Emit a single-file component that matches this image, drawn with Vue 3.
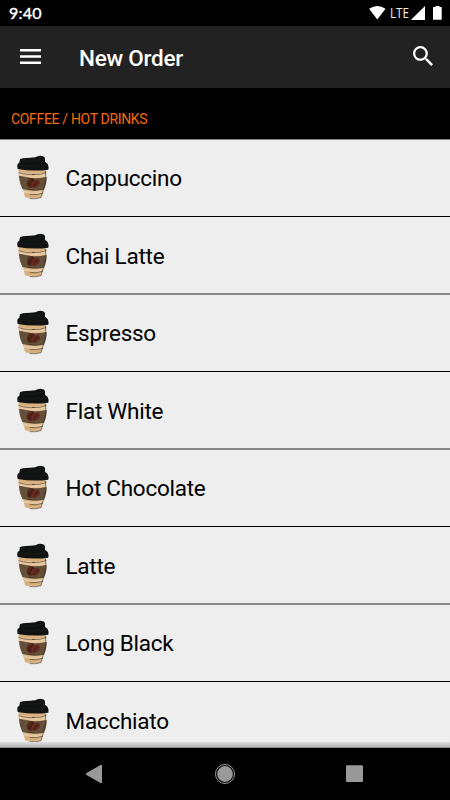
<template>
  <div class="screen">
    <div class="status">
      <span class="clock">9:40</span>
      <svg class="indicators" width="76" height="26" viewBox="0 0 76 26" fill="#fff">
        <path d="M.1 8.700Q8.300 3.400 16.500 8.700L8.300 19.400Z" />
        <text x="21" y="18" textLength="19" lengthAdjust="spacingAndGlyphs">LTE</text>
        <path d="M42.300 20V19.500L56 6V20Z" />
        <path d="M64.800 7H66.500V6h4V7h2.200V19.800H64V7Z" />
      </svg>
    </div>

    <header class="appbar">
      <button type="button" class="icon-btn menu" aria-label="Menu">
        <svg width="21" height="15" viewBox="0 0 21 15" fill="#fff">
          <path d="M0 0h21v2.600H0zM0 6.200h21v2.600H0zM0 12.400h21v2.600H0z" />
        </svg>
      </button>
      <h1>New Order</h1>
      <button type="button" class="icon-btn search" aria-label="Search">
        <svg width="20" height="20" viewBox="3 3 17.500 17.500" fill="#fff">
          <path d="M15.500 14h-.79l-.28-.27A6.471 6.471 0 0 0 16 9.500 6.500 6.500 0 1 0 9.500 16c1.610 0 3.090-.59 4.230-1.570l.27.28v.79l5 4.990L20.490 19l-4.990-5zm-6 0C7.010 14 5 11.990 5 9.500S7.010 5 9.500 5 14 7.010 14 9.500 11.990 14 9.500 14z" />
        </svg>
      </button>
    </header>

    <div class="section">COFFEE / HOT DRINKS</div>

    <ul class="list">
      <li v-for="drink in drinks" :key="drink" class="row">
        <svg class="cup" width="34" height="46" viewBox="18 30 102 138">
          <path fill="#d8b17e" d="M26 70L107 70Q111 92 104 112Q101 132 94 157Q71 164 45 157Q42 137 32 117Q24 96 26 70Z" />
          <path fill="#e6c7a0" d="M27 81Q66 91 108 82V96Q66 101 28 93Z" />
          <path fill="#645039" d="M27 94Q67 104 110 96Q110 119 102 133Q66 140 37 132Q28 113 27 94Z" />
          <path fill="#e3c7a5" d="M38 135Q67 144 101 136L98 147Q67 148 42 143Z" />
          <path fill="none" stroke="#201b15" stroke-width="1.500" stroke-linecap="round" d="M27 83Q55 92 73 88M68 89Q91 90 108 83M29 94Q52 97 65 101M102 133Q80 140 56 133M60 149Q80 151 98 145M60 161Q78 163 93 158L103 125Q110 105 107 79" />
          <ellipse fill="#55271b" cx="63" cy="114" rx="12" ry="15" transform="rotate(28 63 114)" />
          <ellipse fill="#642b1e" cx="77" cy="116" rx="14" ry="10" transform="rotate(-38 77 116)" />
          <path fill="none" stroke="#28130e" stroke-width="2" d="M57 124Q61 117 61 112Q66 111 69 104M69 125Q76 121 76 115Q82 116 84 109" />
          <path fill="#111212" d="M30 42Q34 39 60 38L76 37Q85 31 95 33Q104 33 105 41L105 50L113 57Q117 65 115 74Q69 80 23 72Q20 63 23 57L28 53Z" />
          <path fill="none" stroke="#1c1e1e" stroke-width="2" d="M32 48Q67 51 100 43M27 61Q68 66 109 61" />
        </svg>
        <span>{{ drink }}</span>
      </li>
    </ul>

    <nav class="navbar">
      <svg width="450" height="52" viewBox="0 0 450 52" fill="#999">
        <path d="M86.500 25L100.500 17Q102 16.300 102 18V34Q102 35.700 100.500 35L86.500 27Q85 26 86.500 25Z" />
        <circle cx="225" cy="26" r="7.900" />
        <circle cx="225" cy="26" r="9.500" fill="none" stroke="#999" stroke-width="1" />
        <rect x="346" y="17.300" width="17" height="16.700" rx="1" />
      </svg>
    </nav>
  </div>
</template>

<script setup>
const drinks = [
  'Cappuccino',
  'Chai Latte',
  'Espresso',
  'Flat White',
  'Hot Chocolate',
  'Latte',
  'Long Black',
  'Macchiato'
]
</script>

<style>
body { margin: 0; background: #000; }
</style>

<style scoped>
.screen {
  width: 450px; height: 800px; overflow: hidden;
  display: flex; flex-direction: column;
  background: #000; color: #000; font-family: Roboto, sans-serif;
}
.status {
  flex: none; height: 26px; display: flex; align-items: center; justify-content: space-between;
  padding: 0 5px 0 9px; color: #fff;
}
.clock { font-family: Lato, sans-serif; font-size: 16px; line-height: 26px; letter-spacing: .2px; -webkit-text-stroke: .4px #fff; }
.indicators text { font-family: "Open Sans", sans-serif; font-size: 14px; fill: #eee; }
.appbar {
  flex: none; height: 62px; box-sizing: border-box; display: flex; align-items: center;
  padding: 0 17px 0 20px; background: #222; color: #fff;
}
.icon-btn { display: flex; padding: 0; border: 0; background: none; }
.menu { padding-bottom: 1px; }
.search { margin-left: auto; padding-bottom: 2px; }
h1 { margin: 2px 0 0 38px; font-size: 22.500px; font-weight: 500; line-height: 30px; letter-spacing: -.24px; }
.section {
  flex: none; height: 52px; box-sizing: border-box; padding: 10px 11px 0;
  border-bottom: 1px solid #888; color: #f56a0a; font-size: 14px; line-height: 42px; letter-spacing: -.33px;
}
.list { flex: 1; min-height: 0; margin: 0; padding: 0; overflow: hidden; list-style: none; background: #eee; position: relative; }
.list::after {
  content: ""; position: absolute; left: 0; right: 0; bottom: 0; height: 6px;
  background: linear-gradient(#ddd, #bbb 75%, #777);
}
.row {
  height: 77px; box-sizing: border-box; display: flex; align-items: center;
  padding-left: 16px; border-bottom: 1px solid #000; font-size: 22.500px;
}
/* rows are 77.5px apart, so every other divider falls across two pixels */
.row:nth-child(even) { height: 78px; padding-top: 1px; border-bottom: 2px solid #888; }
.cup { margin-right: 15.500px; }
.row span { letter-spacing: -.25px; }
.navbar { flex: none; height: 52px; }
.navbar svg { display: block; }
</style>
